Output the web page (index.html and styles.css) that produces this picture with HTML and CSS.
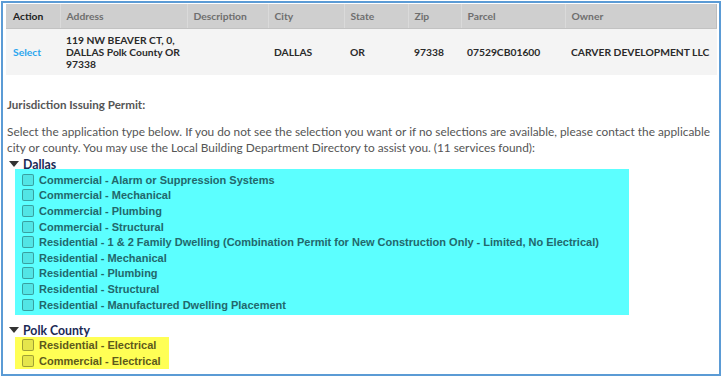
FILE: index.html
```html
<!DOCTYPE html>
<html lang="en">
<head>
  <meta charset="UTF-8">
  <title>Select Record Type</title>
  <link rel="stylesheet" href="styles.css">
</head>
<body>
  <div class="frame">
    <table class="parcels">
      <colgroup>
        <col style="width:54px"><col style="width:127px"><col style="width:81px"><col style="width:76px">
        <col style="width:64px"><col style="width:53px"><col style="width:104px"><col>
      </colgroup>
      <thead>
        <tr>
          <th class="first">Action</th>
          <th>Address</th>
          <th>Description</th>
          <th>City</th>
          <th>State</th>
          <th>Zip</th>
          <th>Parcel</th>
          <th>Owner</th>
        </tr>
      </thead>
      <tbody>
        <tr>
          <td><a href="#" class="select-link">Select</a></td>
          <td>119 NW BEAVER CT, 0,<br>DALLAS Polk County OR<br>97338</td>
          <td></td>
          <td>DALLAS</td>
          <td>OR</td>
          <td>97338</td>
          <td>07529CB01600</td>
          <td>CARVER DEVELOPMENT LLC</td>
        </tr>
      </tbody>
    </table>

    <div class="jurisdiction">Jurisdiction Issuing Permit:</div>

    <p class="intro">Select the application type below. If you do not see the selection you want or if no selections are available, please contact the applicable city or county. You may use the Local Building Department Directory to assist you. (11 services found):</p>

    <div class="group">
      <div class="group-title"><span class="caret"></span>Dallas</div>
      <ul class="services mark-cyan">
        <li><span class="box"></span>Commercial - Alarm or Suppression Systems</li>
        <li><span class="box"></span>Commercial - Mechanical</li>
        <li><span class="box"></span>Commercial - Plumbing</li>
        <li><span class="box"></span>Commercial - Structural</li>
        <li><span class="box"></span>Residential - 1 &amp; 2 Family Dwelling (Combination Permit for New Construction Only - Limited, No Electrical)</li>
        <li><span class="box"></span>Residential - Mechanical</li>
        <li><span class="box"></span>Residential - Plumbing</li>
        <li><span class="box"></span>Residential - Structural</li>
        <li><span class="box"></span>Residential - Manufactured Dwelling Placement</li>
      </ul>
    </div>

    <div class="group">
      <div class="group-title"><span class="caret"></span>Polk County</div>
      <ul class="services mark-yellow">
        <li><span class="box"></span>Residential - Electrical</li>
        <li><span class="box"></span>Commercial - Electrical</li>
      </ul>
    </div>
  </div>
</body>
</html>
```

FILE: styles.css
```css
body, html {
  margin: 0;
  padding: 0;
  background: #fff;
  font-family: Lato, 'Open Sans', sans-serif;
  color: #555;
}
.frame {
  margin: 1px 1px 0 1px;
  height: 375px;
  box-sizing: border-box;
  border: 2px solid #5b9bd5;
  padding: 1px 0 0 3px;
  overflow: hidden;
}
.parcels {
  width: 711px;
  table-layout: fixed;
  border-collapse: collapse;
  font-size: 10.3px;
  font-weight: bold;
}
.parcels th {
  height: 24px;
  padding: 0 0 0 6px;
  text-align: left;
  background: #cfcfcf;
  color: #6e6e6e;
  border-left: 1px solid #dadada;
  border-bottom: 1px solid #c2c2c2;
}
.parcels th.first {
  color: #222;
  border-left: none;
  padding-left: 7px;
}
.parcels th:last-child {
  border-right: 1px solid #bdbdbd;
}
.parcels td {
  height: 46px;
  padding: 0 0 0 6px;
  background: #f4f4f4;
  color: #2a2a2a;
  line-height: 12px;
  white-space: nowrap;
}
.parcels td:first-child {
  padding-left: 7px;
}
.select-link {
  color: #2aa6ee;
  text-decoration: none;
}
.jurisdiction {
  margin: 22px 0 0 1px;
  font-size: 11.6px;
  font-weight: bold;
  line-height: 16px;
  color: #555;
}
.intro {
  width: 705px;
  margin: 11px 0 0 1px;
  font-size: 11.85px;
  line-height: 16px;
  color: #555;
}
.group-title {
  margin: 3px 0 0 2px;
  height: 10px;
  font-size: 12.3px;
  font-weight: bold;
  color: #1c2a55;
  display: flex;
  align-items: center;
}
.caret {
  width: 0;
  height: 0;
  border-left: 5px solid transparent;
  border-right: 5px solid transparent;
  border-top: 6px solid #333;
  margin: 0 4px 0 1px;
}
.services {
  list-style: none;
  margin: 0 0 0 9px;
  padding: 3px 0 3px 0;
  font-family: 'Liberation Sans', Arial, sans-serif;
  font-size: 11px;
  font-weight: bold;
}
.services li {
  height: 15.6px;
  display: flex;
  align-items: center;
  white-space: nowrap;
}
.box {
  width: 10px;
  height: 10px;
  margin: 0 5px 0 7px;
  border: 1px solid rgba(0, 0, 0, 0.3);
  border-radius: 2px;
  background: rgba(0, 0, 0, 0.1);
  flex: none;
}
.mark-cyan {
  width: 614px;
  background: #5cffff;
  color: #22686c;
}
.mark-yellow {
  width: 154px;
  margin-top: 2px;
  background: #ffff55;
  color: #5e5a1c;
  padding: 0;
}
.group + .group {
  margin-top: 10px;
}
```
